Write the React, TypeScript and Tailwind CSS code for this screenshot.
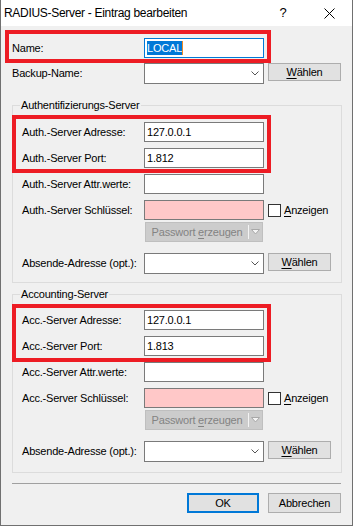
import React from "react";

function U({ children }: { children: React.ReactNode }) {
  return <span className="underline decoration-1 underline-offset-[2px]">{children}</span>;
}

function TextBox({ value, pink }: { value?: string; pink?: boolean }) {
  return (
    <div
      className={
        pink
          ? "h-[20px] w-[120px] shrink-0 border border-[#7a7a7a] bg-[#ffc8c8] flex items-center pl-[2px]"
          : "h-[20px] w-[120px] shrink-0 border border-[#7a7a7a] bg-white flex items-center pl-[2px]"
      }
    >
      {value}
    </div>
  );
}

function Combo() {
  return (
    <div className="h-[21px] w-[120px] shrink-0 border border-[#7a7a7a] bg-white flex items-center justify-end pr-[4px]">
      <svg width="8" height="5" viewBox="0 0 8 5">
        <path d="M0.5 0.5 L4 4 L7.5 0.5" stroke="#555" strokeWidth="1" fill="none" />
      </svg>
    </div>
  );
}

function Btn({ wide }: { wide?: boolean }) {
  return (
    <div
      className={
        wide
          ? "ml-[4px] h-[18px] w-[73px] shrink-0 border border-[#adadad] bg-[#e1e1e1] flex items-center justify-center"
          : "ml-[4px] h-[18px] w-[63px] shrink-0 border border-[#adadad] bg-[#e1e1e1] flex items-center justify-center"
      }
    >
      <span>
        <U>W</U>ählen
      </span>
    </div>
  );
}

function Red({ cls }: { cls: string }) {
  return <div className={cls} />;
}

function Group({
  title,
  cls,
  prefix,
  port,
  redCls,
}: {
  title: string;
  cls: string;
  prefix: string;
  port: string;
  redCls: string;
}) {
  return (
    <div className={cls}>
      <div className="absolute -top-[7px] left-[7px] bg-[#f0f0f0] px-px leading-[13px]">{title}</div>
      <div className="relative flex flex-col gap-[6px] w-[242px]">
        <div className="flex items-center">
          <div className="w-[122px] shrink-0">{prefix}-Server Adresse:</div>
          <TextBox value="127.0.0.1" />
        </div>
        <div className="flex items-center">
          <div className="w-[122px] shrink-0">{prefix}-Server Port:</div>
          <TextBox value={port} />
        </div>
        <Red cls={redCls} />
      </div>
      <div className="mt-[6px] flex items-center">
        <div className="w-[122px] shrink-0">{prefix}-Server Attr.werte:</div>
        <TextBox />
      </div>
      <div className="mt-[6px] flex items-center">
        <div className="w-[122px] shrink-0">{prefix}-Server Schlüssel:</div>
        <TextBox pink />
        <div className="ml-[4px] h-[13px] w-[13px] border border-[#333] bg-white" />
        <div className="ml-[3px]">
          <U>A</U>nzeigen
        </div>
      </div>
      <div className="mt-[2px] ml-[123px] h-[20px] w-[118px] border border-[#bfbfbf] bg-[#cccccc] flex items-center text-[#838383]">
        <div className="flex-1 text-center">
          Passwort <U>e</U>rzeugen
        </div>
        <div className="h-[14px] w-px bg-[#f4f4f4]" />
        <div className="w-[13px] flex justify-center">
          <svg width="9" height="6" viewBox="0 0 9 6">
            <path d="M0.5 0.5 L8.5 0.5 L4.5 5 Z" fill="#f4f4f4" stroke="#a8a8a8" strokeWidth="1" />
          </svg>
        </div>
      </div>
      <div className="mt-[11px] flex items-start">
        <div className="w-[122px] shrink-0 h-[21px] flex items-center">Absende-Adresse (opt.):</div>
        <Combo />
        <Btn />
      </div>
    </div>
  );
}

export default function App() {
  return (
    <div className="w-[353px] h-[526px] flex flex-col border-x border-b border-[#707070] bg-[#f0f0f0] font-['Liberation_Sans',Arial,sans-serif] text-[11px] tracking-[-0.2px] text-black select-none">
      <div className="h-[26px] shrink-0 bg-white flex items-center">
        <div className="flex-1 pl-[3px] text-[12px] tracking-[-0.3px]">RADIUS-Server - Eintrag bearbeiten</div>
        <div className="w-[46px] h-full flex items-center justify-center text-[13px]">?</div>
        <div className="w-[46px] h-full flex items-center justify-center">
          <svg width="11" height="11" viewBox="0 0 11 11">
            <path d="M0.5 0.5 L10.5 10.5 M10.5 0.5 L0.5 10.5" stroke="#000" strokeWidth="1" />
          </svg>
        </div>
      </div>

      <div className="flex-1 pl-[11px] pt-[12px] flex flex-col">
        <div className="relative flex items-center w-[252px]">
          <div className="w-[132px] shrink-0">Name:</div>
          <div className="h-[20px] w-[120px] shrink-0 border border-[#0078d7] bg-white flex items-center pl-[2px]">
            <span className="inline-block bg-[#0078d7] text-white leading-[14px]">LOCAL</span>
            <span className="inline-block h-[14px] w-px bg-[#f08a24]" />
          </div>
          <Red cls="absolute -left-[7px] -right-[7px] -top-[8px] -bottom-[5px] border-4 border-[#ed1c24] pointer-events-none" />
        </div>

        <div className="mt-[5px] flex items-start">
          <div className="w-[132px] shrink-0 h-[21px] flex items-center">Backup-Name:</div>
          <Combo />
          <Btn wide />
        </div>

        <Group
          title="Authentifizierungs-Server"
          prefix="Auth."
          port="1.812"
          cls="relative mt-[21px] w-[330px] border border-[#dcdcdc] pl-[9px] pt-[16px] pb-[8px]"
          redCls="absolute -left-[10px] -right-[7px] -top-[7px] -bottom-[5px] border-4 border-[#ed1c24] pointer-events-none"
        />

        <Group
          title="Accounting-Server"
          prefix="Acc."
          port="1.813"
          cls="relative mt-[11px] w-[330px] border border-[#dcdcdc] pl-[9px] pt-[15px] pb-[10px]"
          redCls="absolute -left-[10px] -right-[7px] -top-[6px] -bottom-[6px] border-4 border-[#ed1c24] pointer-events-none"
        />

        <div className="mt-[10px] h-px w-[329px] bg-[#a0a0a0]" />

        <div className="mt-[9px] w-[329px] flex justify-end gap-[9px]">
          <div className="h-[20px] w-[72px] border-2 border-[#0078d7] bg-[#e1e1e1] flex items-center justify-center">OK</div>
          <div className="h-[20px] w-[73px] border border-[#adadad] bg-[#e1e1e1] flex items-center justify-center">Abbrechen</div>
        </div>
      </div>
    </div>
  );
}
